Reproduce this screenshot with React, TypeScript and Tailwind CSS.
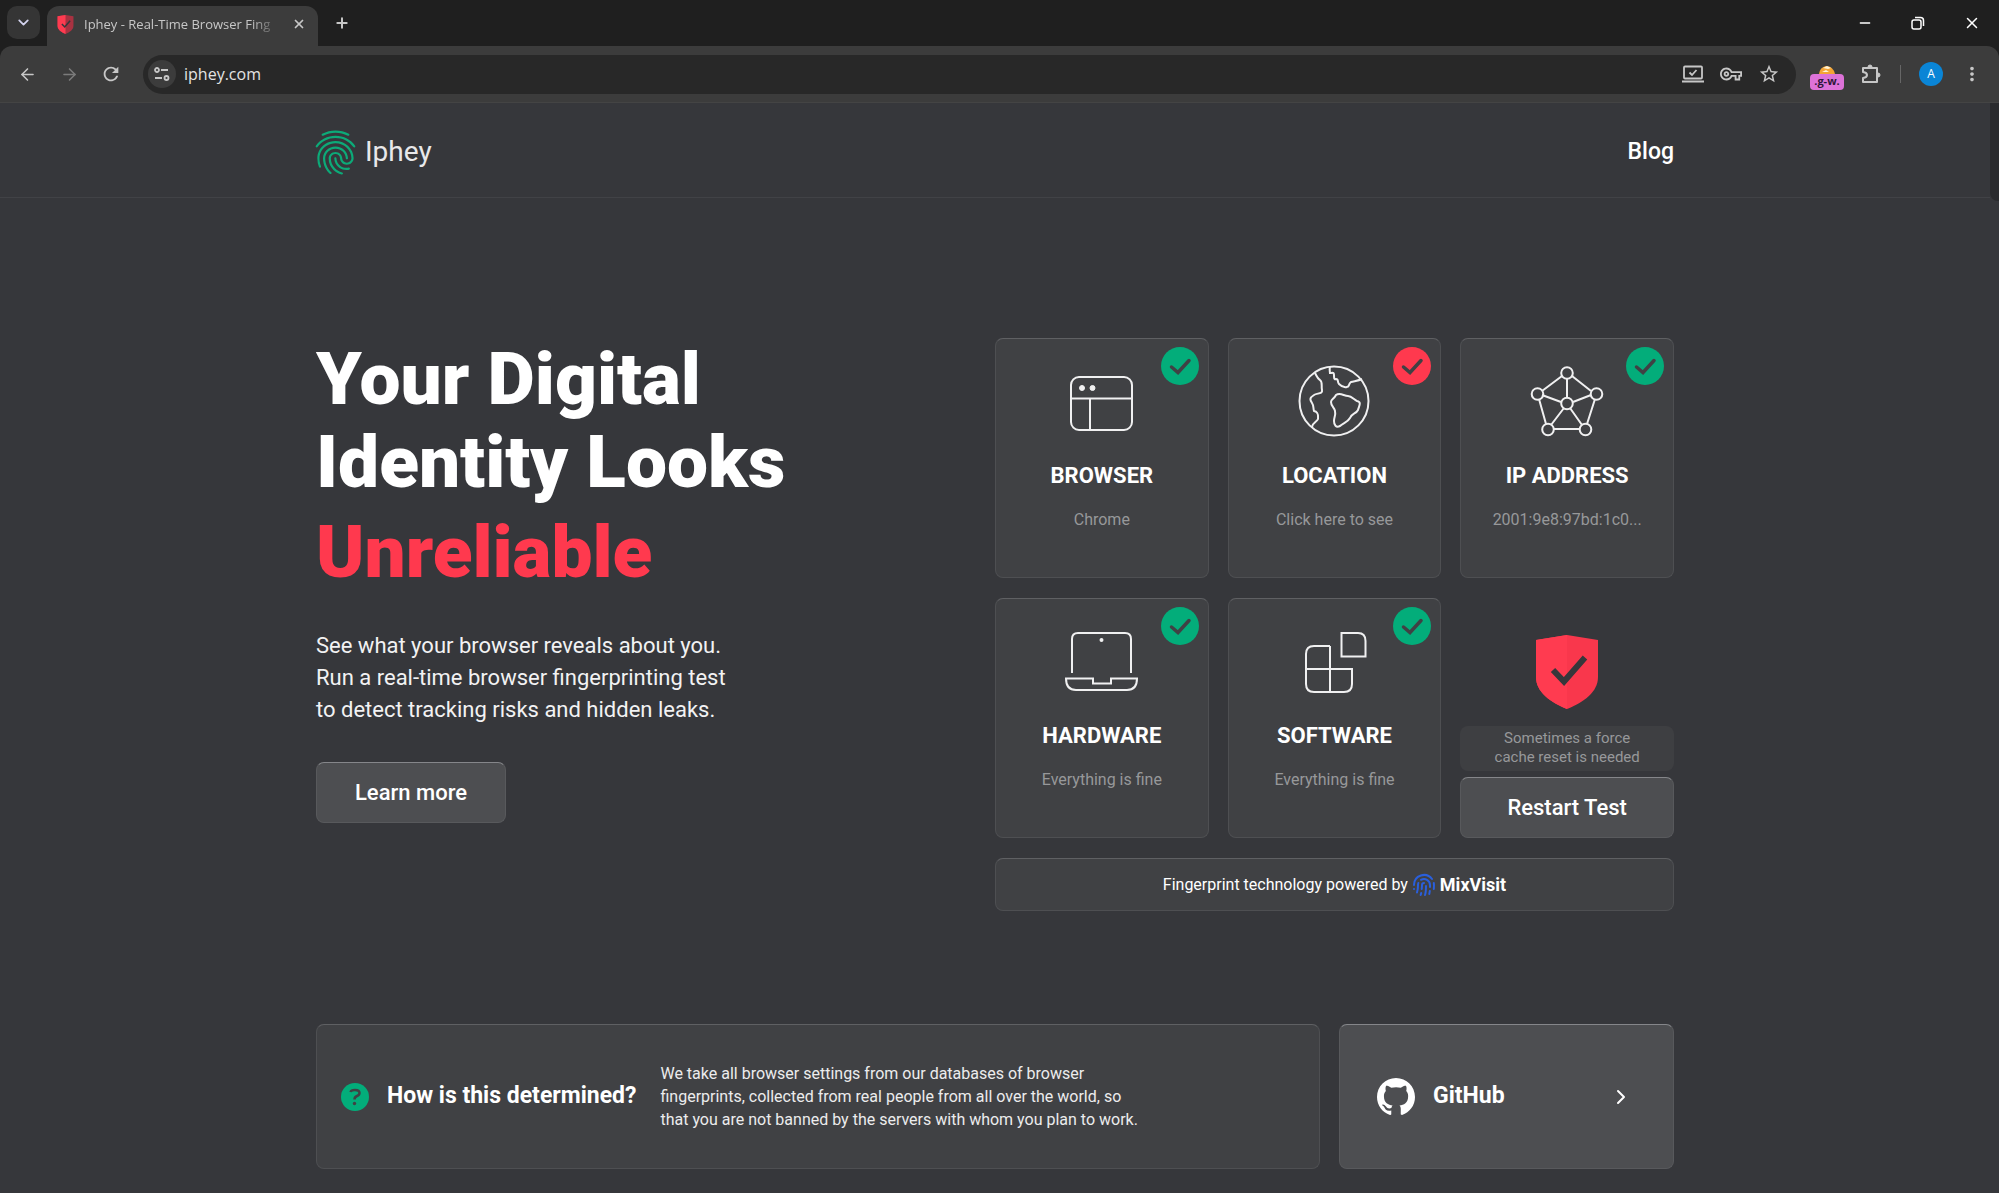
import React from 'react';
import clsx from 'clsx';
import { ArrowLeft, ArrowRight, ChevronDown, ChevronRight, Fingerprint, Minus, Plus, X } from 'lucide-react';
import { BsGithub } from 'react-icons/bs';
import { MdFingerprint, MdMoreVert, MdOutlineVpnKey, MdRefresh, MdStarBorder } from 'react-icons/md';

const cardStyle = 'rounded-lg border border-[#4e4f52] border-t-[#5f6063] bg-[#404144]';
const buttonStyle = 'rounded-lg border border-[#58595c] border-t-[#85868a] bg-[#4d4e51] text-white';

const ShieldIcon = ({ className, shade = '#f9374c' }: { className?: string; shade?: string }) => (
  <svg viewBox="0 0 62 74" className={className} aria-hidden="true">
    <path d="M31 0 62 5V42C62 57 48 67 31 74 14 67 0 57 0 42V5Z" fill={shade} />
    <path d="M31 0V74C14 67 0 57 0 42V5Z" fill="#ff3b50" />
    <path d="M17 35 28 46.500 49 22.500" fill="none" stroke="#36373b" strokeWidth="6" />
  </svg>
);

const BrowserIcon = () => (
  <>
    <rect x="6" y="13" width="61" height="53" rx="8" />
    <path d="M6 34.500H67M25 34.500V66" />
    <circle cx="17" cy="24" r="2.500" fill="currentColor" strokeWidth="1" />
    <circle cx="27.500" cy="24" r="2.500" fill="currentColor" strokeWidth="1" />
  </>
);

const GlobeIcon = () => (
  <>
    <circle cx="37" cy="37" r="34.500" />
    <path d="M18 9C20 13 21 15 23 16C26 18 24 22 25 26C26 30 20 29 17 31C12 34 13 36 15 39C17 42 16 44 17 47C22 48 21 52 21 55C20 58 16 58 15 63" />
    <path d="M33 3C32 6 33 8 33 9C35 9 37 8 37 11C37 14 37 16 39 15C42 15 40 18 42 20C44 22 47 24 50 23C53 23 51 20 54 18C57 17 61 17 65 15" />
    <path d="M39 31C43 28 47 32 51 32C55 32 57 36 60 37C65 38 62 42 61 46C59 50 55 49 53 54C51 58 46 59 43 62C39 64 37 61 37 57C37 53 39 51 38 47C37 43 34 42 34 38C34 35 37 35 39 31Z" />
  </>
);

const NetworkIcon = () => (
  <>
    <path d="M32 12 12 27M42 12 61 27M9 35 16 60M65 35 57 60M24 65H50M37 15V34M12 31 31 38M61 31 43 38M34 44 21 61M40 44 52 61" />
    <circle cx="37" cy="9" r="5.800" />
    <circle cx="7.500" cy="30" r="5.800" />
    <circle cx="66.500" cy="30" r="5.800" />
    <circle cx="37" cy="39.500" r="5.800" />
    <circle cx="18" cy="65.500" r="5.800" />
    <circle cx="55.500" cy="65.500" r="5.800" />
  </>
);

const LaptopIcon = () => (
  <>
    <path d="M7 49V15Q7 9 13 9H60Q66 9 66 15V49" />
    <path d="M1 54.500H28V59.500H46V54.500H72Q72 66 62 66H11Q1 66 1 54.500Z" />
    <circle cx="36.500" cy="16" r="1" />
  </>
);

const BlocksIcon = () => (
  <>
    <path d="M33 22H17Q9 22 9 30V60Q9 68 17 68H47Q55 68 55 60V45H9M33 22V68" />
    <path d="M44.500 9H61Q68.500 9 68.500 17V32.500H44.500Z" />
  </>
);

const checks = [
  { title: 'BROWSER', text: 'Chrome', ok: true, icon: <BrowserIcon /> },
  { title: 'LOCATION', text: 'Click here to see', ok: false, icon: <GlobeIcon /> },
  { title: 'IP ADDRESS', text: '2001:9e8:97bd:1c0...', ok: true, icon: <NetworkIcon /> },
  { title: 'HARDWARE', text: 'Everything is fine', ok: true, icon: <LaptopIcon /> },
  { title: 'SOFTWARE', text: 'Everything is fine', ok: true, icon: <BlocksIcon /> },
];

const BrowserBar: React.FC = () => (
  <div className="bg-[#1f1f1f] font-['Open_Sans',sans-serif] text-[#c7c7c7]">
    {/* Tab strip */}
    <div className="flex h-[46px] items-end justify-between pl-[7px]">
      <div className="flex h-10 items-start">
        <button aria-label="Search tabs" className="flex h-[33px] w-[33px] items-center justify-center rounded-[10px] bg-[#353535] text-[#d3d3ee]">
          <ChevronDown size={17} strokeWidth={2.5} />
        </button>
        <div className="ml-[7px] flex h-10 w-[271px] items-center rounded-t-xl bg-[#3c3c3c] pr-3 pl-[9px]">
          <ShieldIcon className="mb-1 h-[19px] w-[19px]" shade="#a83241" />
          <span className="mb-0.5 ml-[9px] flex-1 mask-r-from-85% text-[13px] whitespace-nowrap">Iphey - Real-Time Browser Fing</span>
          <button aria-label="Close tab" className="mb-1 ml-3">
            <X size={14} strokeWidth={3} />
          </button>
        </div>
        <button aria-label="New tab" className="mt-[9px] ml-4">
          <Plus size={16} strokeWidth={3} />
        </button>
      </div>
      <div className="flex h-full items-center gap-[38px] pr-[18px] text-white">
        <button aria-label="Minimize">
          <Minus size={16} />
        </button>
        <button aria-label="Restore">
          <svg width="14" height="14" viewBox="0 0 14 14" fill="none" stroke="currentColor" strokeWidth="1.500">
            <rect x="1" y="4" width="9" height="9" rx="2" />
            <path d="M4 1.500H9.500Q12.500 1.500 12.500 4.500V10" />
          </svg>
        </button>
        <button aria-label="Close window">
          <X size={18} />
        </button>
      </div>
    </div>

    {/* Toolbar */}
    <div className="flex h-[57px] items-center rounded-t-xl border-b border-[#444444] bg-[#3c3c3c] pr-4 pl-[18px]">
      <button aria-label="Back">
        <ArrowLeft size={19} />
      </button>
      <button aria-label="Forward" className="ml-[23px] text-[#7b7b7b]">
        <ArrowRight size={19} />
      </button>
      <button aria-label="Reload" className="ml-[21px]">
        <MdRefresh size={22} />
      </button>
      <div className="ml-[21px] flex h-[39px] flex-1 items-center rounded-full bg-[#282828] pr-4 pl-[5px]">
        <button aria-label="Site information" className="flex h-7 w-7 items-center justify-center rounded-full bg-[#3c3c3c]">
          <svg width="16" height="14" viewBox="0 0 16 14" fill="none" stroke="currentColor" strokeWidth="1.800">
            <circle cx="3" cy="3" r="2" />
            <path d="M7 3H14M1 11H8" />
            <circle cx="12.500" cy="11" r="2" />
          </svg>
        </button>
        <input aria-label="Address" defaultValue="iphey.com" className="ml-2 flex-1 bg-transparent text-base text-[#e3e3e3] outline-none" />
        <div className="flex items-center gap-4">
          <svg width="22" height="18" viewBox="0 0 22 18" fill="none" stroke="currentColor" strokeWidth="1.800">
            <rect x="2" y="1.500" width="18" height="12" rx="1" />
            <path d="M0 16.500H22M7.500 7.500 10 10 14.500 5" />
          </svg>
          <MdOutlineVpnKey size={22} />
          <MdStarBorder size={22} />
        </div>
      </div>
      <div className="mt-1.5 ml-[14px] flex w-[34px] flex-col items-center">
        <svg width="18" height="9" viewBox="0 0 18 9">
          <path d="M1 9Q2 2 8 1Q15 1 17 9Z" fill="#f3a536" />
          <path d="M5 3 9 1 13 3 10 4ZM4 7 8 5 11 7Z" fill="#fff4d8" />
        </svg>
        <span className="flex h-4 w-full items-center justify-center rounded-[4px] bg-[#dd72d8] text-[11px] font-bold text-[#2d1638]">.g-w.</span>
      </div>
      <button aria-label="Extensions" className="ml-[17px]">
        <svg width="21" height="21" viewBox="0 0 21 21" fill="none" stroke="currentColor" strokeWidth="2" strokeLinejoin="round">
          <path d="M2 4H16V18H2V14Q6 13.500 6 11Q6 8.500 2 8Z" />
          <path d="M7 3Q7 1 9 1Q11 1 11 3ZM17 9Q19 9 19 11Q19 13 17 13Z" fill="currentColor" strokeWidth="1" />
        </svg>
      </button>
      <div className="mx-[18px] h-[18px] w-px bg-[#666666]" />
      <button aria-label="Profile" className="flex h-6 w-6 items-center justify-center rounded-full bg-[#0a85d6] text-xs text-white">A</button>
      <button aria-label="Menu" className="ml-[18px]">
        <MdMoreVert size={22} />
      </button>
    </div>
  </div>
);

const Header: React.FC = () => (
  <header className="border-b border-[#414246]">
    <div className="mx-auto flex h-[94px] max-w-[1358px] items-center justify-between pt-1">
      <a href="/" className="flex items-center gap-[3px] text-[28px] text-[#e8e8ea]">
        <MdFingerprint size={53} className="-ml-[7px] text-[#0caa78]" />
        <span>Iphey</span>
      </a>
      <nav>
        <a href="/blog" className="text-[23px] font-medium text-white">
          Blog
        </a>
      </nav>
    </div>
  </header>
);

const CheckCard = ({ title, text, ok, icon }: (typeof checks)[number]) => (
  <button className={clsx(cardStyle, 'relative flex h-60 flex-col items-center pt-[25px]')}>
    <svg
      viewBox="0 0 38 38"
      className={clsx('absolute top-2 right-[9px] h-[38px] w-[38px]', ok ? 'text-[#03ad7a]' : 'text-[#ff394e]')}
    >
      <circle cx="19" cy="19" r="19" fill="currentColor" />
      <path d="M10.500 20 17 25.500 28 13.500" fill="none" stroke="#404144" strokeWidth="3.500" strokeLinecap="round" />
    </svg>
    <svg width="74" height="74" viewBox="0 0 74 74" fill="none" stroke="currentColor" strokeWidth="2" className="text-[#f0f0f1]">
      {icon}
    </svg>
    <span className="mt-6 text-[22px] leading-7 font-bold text-white">{title}</span>
    <span className="mt-4 text-base leading-7 text-[#97989a]">{text}</span>
  </button>
);

const App: React.FC = () => {
  return (
    <div className="flex h-screen flex-col overflow-hidden bg-[#36373b] font-['Roboto',sans-serif]">
      <BrowserBar />
      <div className="flex min-h-0 flex-1">
        <div className="min-w-0 flex-1">
          <Header />
          <main className="mx-auto max-w-[1358px]">
            <section className="grid grid-cols-2 pt-[140px]">
              <div>
                <h1 className="text-[73px] leading-[83px] font-black text-white">
                  Your Digital
                  <br />
                  Identity Looks
                  <span className="mt-[7px] block text-[#ff394e]">Unreliable</span>
                </h1>
                <p className="mt-9 text-[22px] leading-8 text-[#f2f2f3]">
                  See what your browser reveals about you.
                  <br />
                  Run a real-time browser fingerprinting test
                  <br />
                  to detect tracking risks and hidden leaks.
                </p>
                <button className={clsx(buttonStyle, 'mt-9 h-[61px] w-[190px] text-[22px] font-medium')}>Learn more</button>
              </div>

              <div>
                <div className="grid grid-cols-3 gap-x-[19px] gap-y-5">
                  {checks.map((check) => (
                    <CheckCard key={check.title} {...check} />
                  ))}
                  <div className="flex flex-col items-center justify-end">
                    <ShieldIcon className="h-[74px] w-[62px]" />
                    <p className="mt-[17px] w-full rounded-lg bg-[#3e3f42] pt-[3px] pb-1 text-center text-[15px] leading-[19px] text-[#97989a]">
                      Sometimes a force
                      <br />
                      cache reset is needed
                    </p>
                    <button className={clsx(buttonStyle, 'mt-[6px] h-[61px] w-full text-[22px] font-medium')}>Restart Test</button>
                  </div>
                </div>
                <div className={clsx(cardStyle, 'mt-5 flex h-[53px] items-center justify-center text-base text-white')}>
                  Fingerprint technology powered by
                  <a href="#mixvisit" className="ml-1 flex items-center gap-1 text-lg font-bold">
                    <Fingerprint size={24} className="text-[#2a5fdc]" />
                    MixVisit
                  </a>
                </div>
              </div>
            </section>

            <section className="mt-[113px] flex gap-[19px]">
              <div className={clsx(cardStyle, 'flex h-[145px] flex-1 items-center pl-6')}>
                <svg width="28" height="28" viewBox="0 0 28 28" fill="none">
                  <circle cx="14" cy="14" r="14" fill="#03ad7a" />
                  <path d="M9.500 9Q10 7 14 7Q18.500 7 18.500 10Q18.500 12 16 13Q13.500 14 13.500 16.500" stroke="#404144" strokeWidth="2.500" />
                  <circle cx="13.500" cy="20.500" r="1.700" fill="#404144" />
                </svg>
                <h2 className="ml-[18px] text-[23px] font-bold text-white">How is this determined?</h2>
                <p className="ml-6 text-base leading-[23px] text-[#ececed]">
                  We take all browser settings from our databases of browser
                  <br />
                  fingerprints, collected from real people from all over the world, so
                  <br />
                  that you are not banned by the servers with whom you plan to work.
                </p>
              </div>
              <a href="#github" className={clsx(buttonStyle, 'flex h-[145px] w-[335px] items-center pr-10 pl-[37px]')}>
                <BsGithub size={38} />
                <span className="ml-[18px] flex-1 text-[23px] font-bold">GitHub</span>
                <ChevronRight size={24} />
              </a>
            </section>
          </main>
        </div>
        <div className="h-[98px] w-[9px] rounded-bl-lg bg-[#2a2b2e]" />
      </div>
    </div>
  );
};

export default App;
